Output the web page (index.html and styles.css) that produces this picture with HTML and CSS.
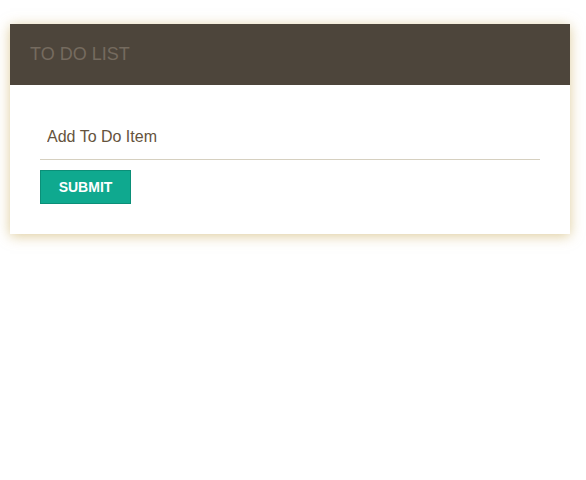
FILE: index.html
```html
<!DOCTYPE html>
<html>
<head>
<meta charset="utf-8">
<link rel="stylesheet" href="styles.css">
</head>
<body>
<div class="card">
  <div class="card-header"><h1 class="title">TO DO LIST</h1></div>
  <form class="card-body">
    <input class="todo-input" type="text" placeholder="Add To Do Item">
    <button class="submit" type="button">SUBMIT</button>
  </form>
</div>
</body>
</html>
```
FILE: styles.css
```css
html, body { margin: 0; padding: 0; background: #fff; }
body { padding: 24px 10px; font-family: "Liberation Sans", Arial, sans-serif; }
.card {
  width: 560px;
  background: #fff;
  box-shadow: 0 2px 12px rgba(200, 170, 90, 0.6);
}
.card-header {
  height: 61px;
  background: #4d453b;
  display: flex;
  align-items: center;
  padding-left: 20px;
}
.title {
  margin: 0;
  font-size: 18px;
  font-weight: normal;
  color: #756b5f;
}
.card-body {
  padding: 30px 30px 30px 30px;
  display: flex;
  flex-direction: column;
  align-items: flex-start;
  margin: 0;
}
.todo-input {
  box-sizing: border-box;
  width: 100%;
  height: 45px;
  border: none;
  border-bottom: 1px solid #d6d0c0;
  padding: 0 7px;
  font-family: "Liberation Sans", Arial, sans-serif;
  font-size: 16px;
  outline: none;
}
.todo-input::placeholder { color: #65533d; opacity: 1; }
.submit {
  margin-top: 10px;
  box-sizing: border-box;
  height: 34px;
  width: 91px;
  padding: 0;
  background: #0fa98f;
  border: 1px solid #0b8f78;
  color: #fff;
  font-family: "Liberation Sans", Arial, sans-serif;
  font-weight: bold;
  font-size: 14px;
}
```
